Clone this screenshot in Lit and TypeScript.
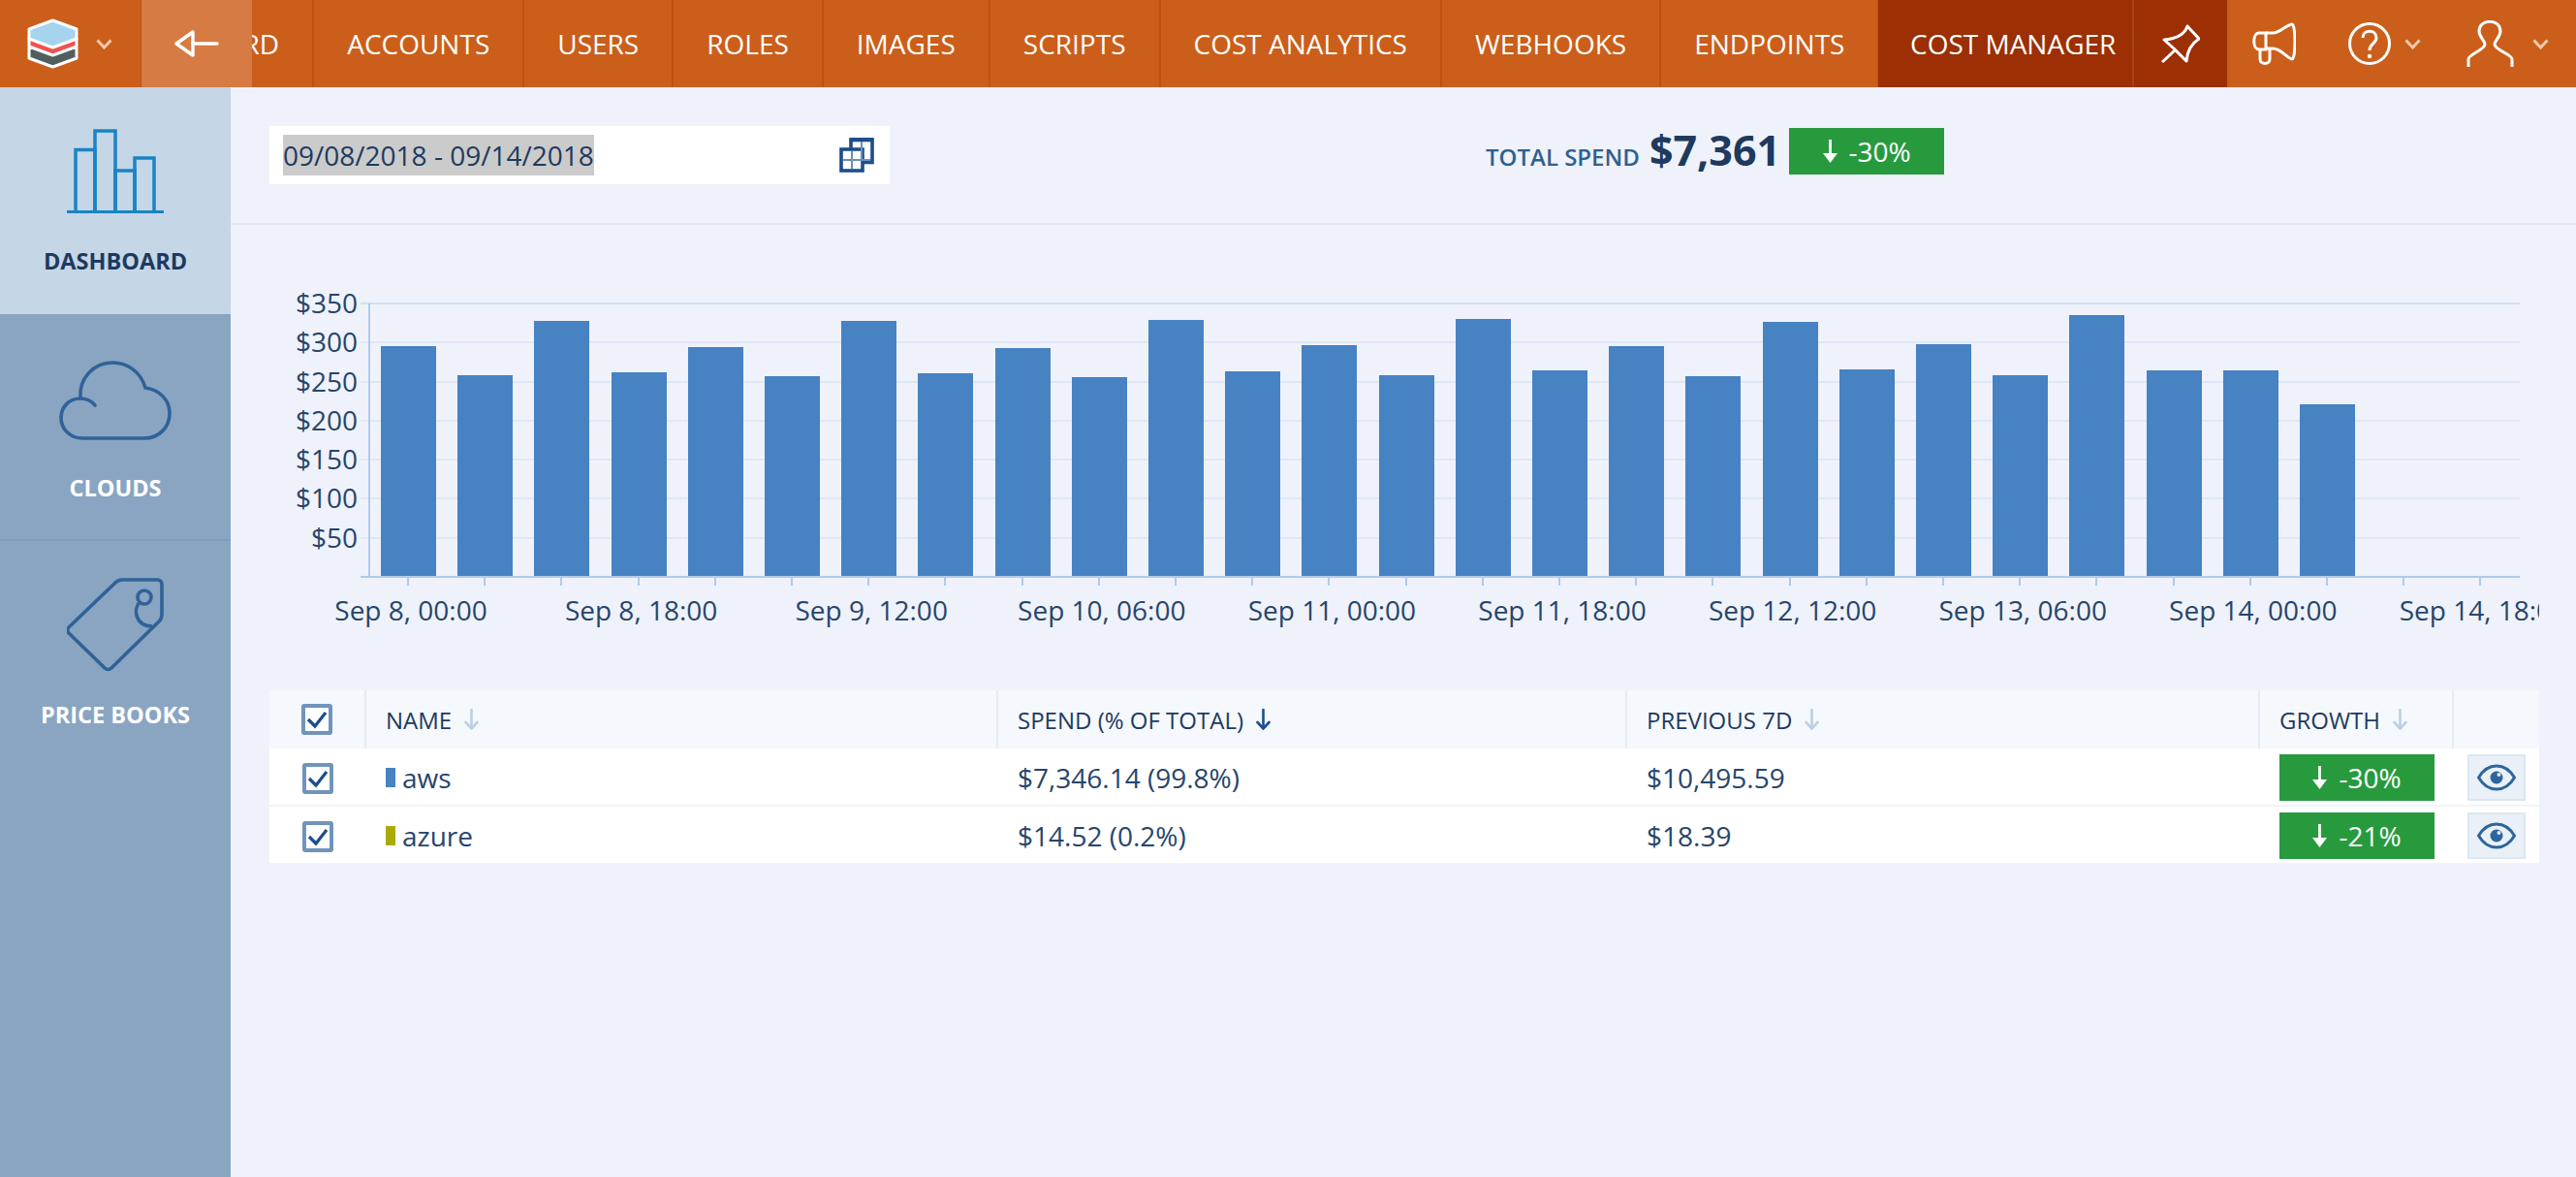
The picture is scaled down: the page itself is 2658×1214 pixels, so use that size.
import { LitElement, css, html, svg } from "lit";
import { customElement } from "lit/decorators.js";

const navItems = [
  "DASHBOARD",
  "ACCOUNTS",
  "USERS",
  "ROLES",
  "IMAGES",
  "SCRIPTS",
  "COST ANALYTICS",
  "WEBHOOKS",
  "ENDPOINTS",
];

const barTops = [
  357, 387, 331, 384, 358, 388, 331, 385, 359, 389, 330, 383, 356, 387, 329, 382,
  357, 388, 332, 381, 355, 387, 325, 382, 382, 417,
];

const yLabels: [string, number][] = [
  ["$350", 313],
  ["$300", 353],
  ["$250", 394],
  ["$200", 434],
  ["$150", 474],
  ["$100", 514],
  ["$50", 555],
];

const xLabels = [
  "Sep 8, 00:00",
  "Sep 8, 18:00",
  "Sep 9, 12:00",
  "Sep 10, 06:00",
  "Sep 11, 00:00",
  "Sep 11, 18:00",
  "Sep 12, 12:00",
  "Sep 13, 06:00",
  "Sep 14, 00:00",
  "Sep 14, 18:00",
];

const rows = [
  { name: "aws", color: "#4782c3", spend: "$7,346.14 (99.8%)", prev: "$10,495.59", growth: "-30%" },
  { name: "azure", color: "#acaa00", spend: "$14.52 (0.2%)", prev: "$18.39", growth: "-21%" },
];

const chevron = html`<svg viewBox="0 0 17 11" width="17" height="11">
  <path d="M1.5 1.5 L8.5 9 L15.5 1.5" fill="none" stroke="#f3c9ac" stroke-width="3" />
</svg>`;

const sortArrow = (cls: string) => html`<svg class=${cls} viewBox="0 0 15 22">
  <path d="M7.5 1 V20" fill="none" stroke="currentColor" stroke-width="2.6" stroke-linecap="round" />
  <path d="M1.5 14 L7.5 20.5 L13.5 14" fill="none" stroke="currentColor" stroke-width="2.6" stroke-linecap="round" />
</svg>`;

const growthArrow = html`<svg viewBox="0 0 15 24" width="15" height="24">
  <path d="M7.5 0 V16" fill="none" stroke="#fff" stroke-width="2.8" />
  <path d="M0 14 H15 L7.5 24 Z" fill="#fff" />
</svg>`;

const check = html`<svg class="check" viewBox="0 0 32 32" width="32" height="32">
  <rect x="2" y="2" width="28" height="28" rx="1" fill="#fff" stroke="#7094bd" stroke-width="4" />
  <path d="M7 16 L14 23 L25 9" fill="none" stroke="#1c4e8c" stroke-width="3.2" />
</svg>`;

const eye = html`<svg viewBox="0 0 40 28" width="40" height="28">
  <path d="M1.5 14 C 11 -2, 29 -2, 38.5 14 C 29 30, 11 30, 1.5 14 Z" fill="none" stroke="#2d659d" stroke-width="3" />
  <circle cx="20" cy="14" r="6.5" fill="#2d659d" />
  <circle cx="22.5" cy="11" r="2" fill="#dfe9f4" />
</svg>`;

@customElement("app-root")
export class AppRoot extends LitElement {
  static styles = css`
    :host {
      display: flex;
      flex-direction: column;
      width: 2658px;
      height: 1214px;
      overflow: hidden;
      background: #eff2fa;
      color: #1e3a5f;
      font-family: "Open Sans", "Noto Sans", sans-serif;
    }

    /* top bar */
    .topbar {
      display: flex;
      height: 90px;
      flex: none;
      background: #cb5e1a;
      color: #fff;
      position: relative;
    }
    .logo {
      width: 146px;
      flex: none;
      display: flex;
      align-items: center;
      padding-left: 28px;
      gap: 18px;
      box-sizing: border-box;
      border-right: 1px solid #bb5214;
    }
    .back {
      position: absolute;
      left: 146px;
      top: 0;
      width: 114px;
      height: 90px;
      background: #d67b43;
      display: flex;
      align-items: center;
      justify-content: center;
      z-index: 1;
    }
    .nav-scroll {
      flex: 1;
      min-width: 0;
      overflow: hidden;
    }
    .nav {
      display: flex;
      height: 90px;
      margin-left: -61px;
    }
    .nav-item {
      display: flex;
      align-items: center;
      padding: 0 34px;
      font-size: 28px;
      white-space: nowrap;
      border-right: 2px solid #bb5214;
    }
    .cost {
      background: #9c2f03;
      display: flex;
      height: 90px;
      flex: none;
      width: 360px;
    }
    .cost-label {
      display: flex;
      align-items: center;
      padding: 0 17px 0 33px;
      font-size: 28px;
      white-space: nowrap;
      border-right: 2px solid #ad4210;
    }
    .pin {
      flex: 1;
      display: flex;
      align-items: center;
      justify-content: center;
    }
    .tools {
      flex: none;
      width: 360px;
      display: flex;
      align-items: center;
    }
    .tool {
      display: flex;
      align-items: center;
    }
    .tool.horn {
      margin-left: 26px;
    }
    .tool.help {
      margin-left: 54px;
      gap: 14px;
    }
    .tool.user {
      margin-left: 47px;
      gap: 19px;
    }

    /* body */
    .body {
      flex: 1;
      display: flex;
      min-height: 0;
    }
    .side {
      width: 238px;
      flex: none;
      background: #89a5c2;
    }
    .side-item {
      height: 234px;
      box-sizing: border-box;
      display: flex;
      flex-direction: column;
      align-items: center;
      font-size: 23.5px;
      font-weight: 700;
      color: #fff;
      border-bottom: 2px solid #7e9dbf;
    }
    .side-item.active {
      background: #c5d6e7;
      color: #1e3a5f;
      border-bottom: none;
    }
    .side-item.last {
      border-bottom: none;
    }
    .side-item .ic {
      height: 135px;
      display: flex;
      align-items: flex-end;
      justify-content: center;
    }
    .ic .up {
      margin-bottom: 5px;
    }
    .side-item .label {
      margin-top: 29px;
      line-height: 30px;
    }

    .main {
      flex: 1;
      min-width: 0;
      display: flex;
      flex-direction: column;
    }
    .head {
      height: 142px;
      flex: none;
      box-sizing: border-box;
      border-bottom: 2px solid #e0e9f5;
      display: flex;
      align-items: flex-start;
      padding: 40px 0 0 40px;
    }
    .range {
      width: 640px;
      height: 60px;
      box-sizing: border-box;
      background: #fff;
      display: flex;
      align-items: center;
      justify-content: space-between;
      padding: 0 16px 0 14px;
      font-size: 28px;
    }
    .range span {
      background: #cbcbcb;
      line-height: 42px;
    }
    .total {
      display: flex;
      align-items: baseline;
      margin: 2px 0 0 615px;
    }
    .total .t-label {
      font-size: 24px;
      font-weight: 600;
      color: #2f6091;
      margin-right: 10px;
    }
    .total .t-value {
      font-size: 43px;
      font-weight: 700;
      line-height: 46px;
      margin-right: 9px;
    }
    .badge {
      background: #289a3e;
      color: #fff;
      display: flex;
      align-items: center;
      justify-content: center;
      gap: 12px;
      font-size: 28px;
      width: 160px;
      height: 48px;
    }
    .total .badge {
      align-self: flex-start;
    }

    .chart {
      display: block;
      flex: none;
    }
    .chart text {
      font-family: "Open Sans", "Noto Sans", sans-serif;
      font-size: 28px;
      fill: #27456b;
    }

    .table {
      margin: 0 38px 0 40px;
      display: grid;
      grid-template-columns: 100px 652px 649px 653px 200px 1fr;
      flex: none;
    }
    .th {
      height: 60px;
      box-sizing: border-box;
      background: #f5f8fc;
      border-right: 2px solid #e2ebf6;
      display: flex;
      align-items: center;
      gap: 13px;
      padding-left: 20px;
      font-size: 24px;
      font-weight: 500;
      color: #1e3a5f;
    }
    .th.center,
    .td.center {
      justify-content: center;
      padding-left: 0;
    }
    .th.last {
      border-right: none;
    }
    .arrow {
      width: 15px;
      height: 22px;
      color: #bccfe4;
    }
    .arrow.on {
      color: #1c4e8c;
    }
    .td {
      height: 60px;
      box-sizing: border-box;
      background: #fff;
      border-bottom: 2px solid #f1f5fb;
      display: flex;
      align-items: center;
      padding: 2px 0 0 20px;
      font-size: 28px;
      color: #27456b;
    }
    .td .check {
      margin-top: 2px;
    }
    .swatch {
      width: 10px;
      height: 20px;
      margin-right: 7px;
    }
    .eye {
      width: 60px;
      height: 48px;
      box-sizing: border-box;
      background: #e9f0f8;
      border: 2px solid #dbe7f3;
      display: flex;
      align-items: center;
      justify-content: center;
    }
  `;

  private renderChart() {
    const originX = 238;
    const originY = 232;
    const ox = (x: number) => x - originX;
    const oy = (y: number) => y - originY;
    const bottom = 595;
    const end = 2600;
    return html`<svg class="chart" width="2382" height="480" viewBox="0 0 2382 480">
      ${yLabels.map(
        ([label, y], i) => svg`
          <rect x=${ox(372)} y=${oy(y) - 1} width=${end - 372} height="2" fill=${i === 0 ? "#cfe0f5" : "#dfe8f7"} />
          <text x=${ox(369)} y=${oy(y) + 10} text-anchor="end">${label}</text>`
      )}
      ${barTops.map(
        (t, i) => svg`<rect x=${ox(Math.round(393 + 79.2 * i))} y=${oy(t)} width="57" height=${594 - t} fill="#4782c3" />`
      )}
      <rect x=${ox(380)} y=${oy(313)} width="2" height=${bottom - 313} fill="#b0cbea" />
      <rect x=${ox(372)} y=${oy(bottom) - 1} width=${end - 372} height="2" fill="#b0cbea" />
      ${Array.from({ length: 28 }).map(
        (_, i) => svg`<rect x=${ox(Math.round(420 + 79.2 * i))} y=${oy(bottom)} width="2" height="9" fill="#b0cbea" />`
      )}
      ${xLabels.map(
        (label, i) => svg`<text x=${ox(424 + 237.6 * i)} y=${oy(640)} text-anchor="middle">${label}</text>`
      )}
    </svg>`;
  }

  render() {
    return html`
      <div class="topbar">
        <div class="logo">
          <svg viewBox="0 0 53 52" width="53" height="52">
            <path d="M26.5 22 L51 31 V41 L26.5 50 L2 41 V31 Z" fill="#525f5f" stroke="#fff" stroke-width="3" stroke-linejoin="round" />
            <path d="M26.5 12 L51 21 V29 L26.5 38 L2 29 V21 Z" fill="#f0524f" stroke="#fff" stroke-width="3" stroke-linejoin="round" />
            <path d="M26.5 2 L51 11 V21 L26.5 30 L2 21 V11 Z" fill="#a6d3ee" stroke="#fff" stroke-width="3" stroke-linejoin="round" />
          </svg>
          ${chevron}
        </div>
        <div class="back">
          <svg viewBox="0 0 46 28" width="46" height="28">
            <path d="M19 2 L2 14 L19 26 Z" fill="none" stroke="#fff" stroke-width="3.4" stroke-linejoin="round" />
            <path d="M19 14 H44" stroke="#fff" stroke-width="3.4" stroke-linecap="round" />
          </svg>
        </div>
        <div class="nav-scroll">
          <div class="nav">${navItems.map((n) => html`<div class="nav-item">${n}</div>`)}</div>
        </div>
        <div class="cost">
          <div class="cost-label">COST MANAGER</div>
          <div class="pin">
            <svg viewBox="0 0 40 40" width="40" height="40">
              <path d="M27 2 L39 15 C31 20 27 27 26 38 L13 25 L3 16 C15 15 24 11 27 2 Z" fill="none" stroke="#fff" stroke-width="3" stroke-linejoin="round" />
              <path d="M14 27 L1 39" stroke="#fff" stroke-width="3" />
            </svg>
          </div>
        </div>
        <div class="tools">
          <div class="tool horn">
            <svg viewBox="0 0 45 44" width="45" height="44">
              <path d="M14 11 H7 C0 11 0 28 7 28 H14 Z" fill="none" stroke="#fff" stroke-width="3" />
              <path d="M14 11 H21 C29 11 34 3 41 2 C45 2 45 38 41 38 C34 36 30 27 21 27 H14" fill="none" stroke="#fff" stroke-width="3" stroke-linejoin="round" />
              <path d="M8 28 V38 C8 44 18 44 18 38 V28" fill="none" stroke="#fff" stroke-width="3" />
            </svg>
          </div>
          <div class="tool help">
            <svg viewBox="0 0 44 44" width="44" height="44">
              <circle cx="22" cy="22" r="20.5" fill="none" stroke="#fff" stroke-width="3" />
              <path d="M15 16 C15 7 29 7 29 16 C29 22 22 22 22 29" fill="none" stroke="#fff" stroke-width="3" />
              <circle cx="22" cy="35" r="2.2" fill="#fff" />
            </svg>
            ${chevron}
          </div>
          <div class="tool user">
            <svg viewBox="0 0 49 48" width="49" height="48">
              <path d="M2 48 V40 C2 35 18 31 19 25 C19 20 13 18 13 11 C13 -2 35 -2 35 11 C35 18 29 20 29 25 C30 31 47 35 47 40 V48" fill="none" stroke="#fff" stroke-width="3" />
            </svg>
            ${chevron}
          </div>
        </div>
      </div>
      <div class="body">
        <div class="side">
          <div class="side-item active">
            <div class="ic">
              <svg class="up" viewBox="0 0 100 87" width="100" height="87">
                <g fill="none" stroke="#1a84c3" stroke-width="3.5">
                  <path d="M9 85 V21.5 H29 V85" />
                  <path d="M29 85 V2 H50 V85" />
                  <path d="M50 85 V43 H70 V85" />
                  <path d="M70 85 V30 H90 V85" />
                </g>
                <rect x="0" y="84" width="100" height="3" fill="#1a84c3" />
              </svg>
            </div>
            <div class="label">DASHBOARD</div>
          </div>
          <div class="side-item">
            <div class="ic">
              <svg class="up" viewBox="0 0 116 82" width="116" height="82">
                <path d="M22 39 C10 39 2 48 2 59 C2 71 12 80 24 80 H88 C103 80 114 69 114 54 C114 41 104 30 89 28 C84 11 70 2 55 2 C36 2 20 18 22 39 C28 39 33 41 37 46" fill="none" stroke="#2f6298" stroke-width="3.6" stroke-linecap="round" />
              </svg>
            </div>
            <div class="label">CLOUDS</div>
          </div>
          <div class="side-item last">
            <div class="ic">
              <svg viewBox="0 0 100 97" width="100" height="97">
                <path d="M2 51 L50 5 C52 3 54 2 57 2 H93 C96 2 98 4 98 7 V38 C98 41 97 43 95 45 L46 93 C44 95 41 95 39 93 L2 57 C0 55 0 53 2 51 Z" fill="none" stroke="#2f6298" stroke-width="3.6" stroke-linejoin="round" />
                <circle cx="80" cy="20" r="7" fill="none" stroke="#2f6298" stroke-width="3.6" />
                <path d="M75 25 C68 33 71 50 88 50" fill="none" stroke="#2f6298" stroke-width="3.6" />
              </svg>
            </div>
            <div class="label">PRICE BOOKS</div>
          </div>
        </div>
        <div class="main">
          <div class="head">
            <div class="range">
              <span>09/08/2018 - 09/14/2018</span>
              <svg viewBox="0 0 36 36" width="36" height="36">
                <g fill="#fff" stroke="#1c4e8c" stroke-width="3.6">
                  <rect x="12" y="2.5" width="22" height="23" />
                  <rect x="2" y="12" width="22" height="22" />
                </g>
                <path d="M10.5 1.5 H35.5" stroke="#1c4e8c" stroke-width="3" fill="none" />
                <path d="M14 23 H32 M23 4 V23 M13 14 V32 M4 23 H22" stroke="#6d8fb8" stroke-width="2" fill="none" />
              </svg>
            </div>
            <div class="total">
              <span class="t-label">TOTAL SPEND</span>
              <span class="t-value">$7,361</span>
              <div class="badge">${growthArrow}<span>-30%</span></div>
            </div>
          </div>
          ${this.renderChart()}
          <div class="table">
            <div class="th center">${check}</div>
            <div class="th">NAME ${sortArrow("arrow")}</div>
            <div class="th">SPEND (% OF TOTAL) ${sortArrow("arrow on")}</div>
            <div class="th">PREVIOUS 7D ${sortArrow("arrow")}</div>
            <div class="th">GROWTH ${sortArrow("arrow")}</div>
            <div class="th last"></div>
            ${rows.map(
              (r) => html`
                <div class="td center">${check}</div>
                <div class="td"><span class="swatch" style="background:${r.color}"></span>${r.name}</div>
                <div class="td">${r.spend}</div>
                <div class="td">${r.prev}</div>
                <div class="td"><div class="badge">${growthArrow}<span>${r.growth}</span></div></div>
                <div class="td center"><div class="eye">${eye}</div></div>
              `
            )}
          </div>
        </div>
      </div>
    `;
  }
}
